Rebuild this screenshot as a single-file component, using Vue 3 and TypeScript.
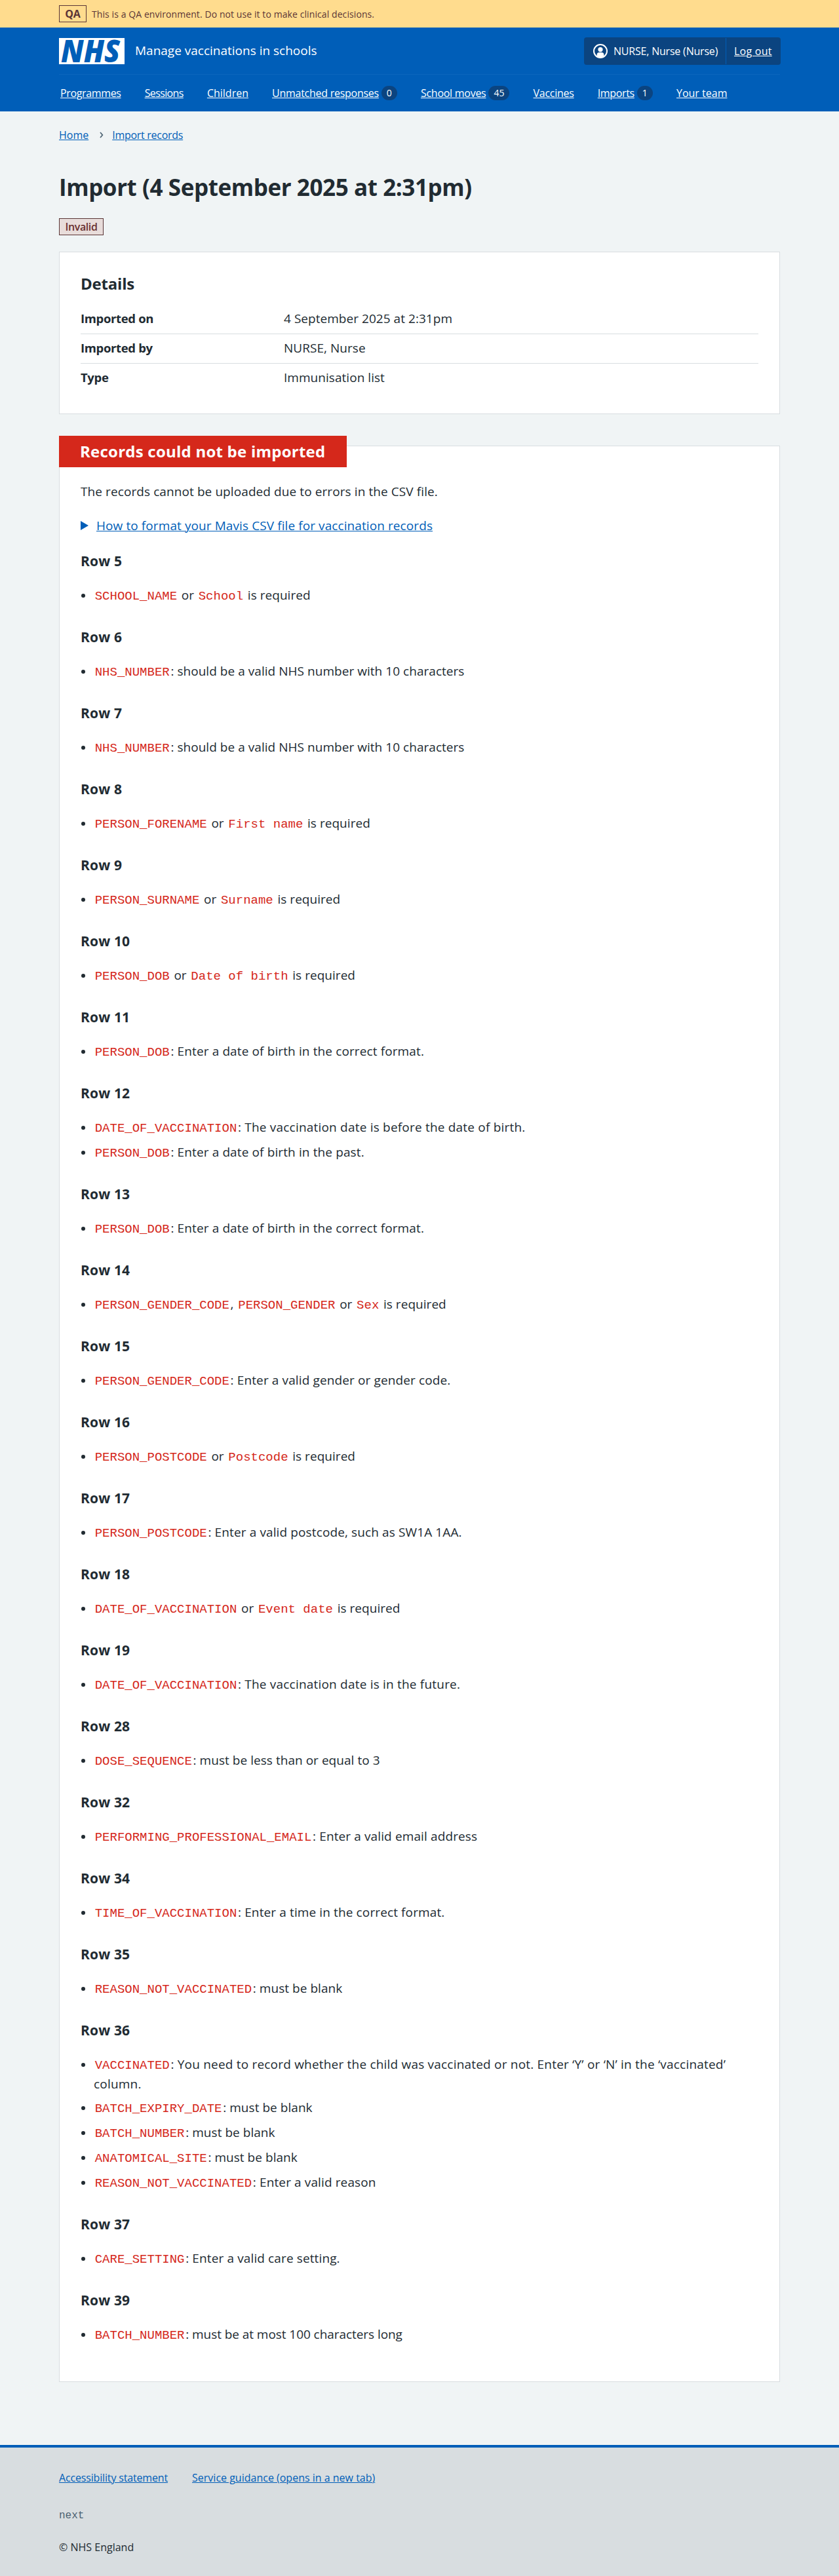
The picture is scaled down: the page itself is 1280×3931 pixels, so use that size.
<script setup lang="ts">
interface Part {
  text: string
  code?: boolean
}

interface RowErrors {
  row: number
  errors: Part[][]
}

interface NavItem {
  label: string
  count?: number
}

const navItems: NavItem[] = [
  { label: 'Programmes' },
  { label: 'Sessions' },
  { label: 'Children' },
  { label: 'Unmatched responses', count: 0 },
  { label: 'School moves', count: 45 },
  { label: 'Vaccines' },
  { label: 'Imports', count: 1 },
  { label: 'Your team' },
]

const details: [string, string][] = [
  ['Imported on', '4 September 2025 at 2:31pm'],
  ['Imported by', 'NURSE, Nurse'],
  ['Type', 'Immunisation list'],
]

// Splits a message on backticks; every second piece is a column name.
const parse = (message: string): Part[] =>
  message
    .split('`')
    .map((text, i) => ({ text, code: i % 2 === 1 }))
    .filter((part) => part.text !== '')

const row = (n: number, ...messages: string[]): RowErrors => ({
  row: n,
  errors: messages.map(parse),
})

// Letter-spacing class, chosen by the wording of the message.
const tracking = (parts: Part[]): string => {
  const text = parts.filter((part) => !part.code).map((part) => part.text).join('')
  if (text.includes('vaccinat')) return 'loose'
  if (text.startsWith(': Enter')) return 'open'
  if (text.includes('at most')) return 'snug'
  return ''
}

const rows: RowErrors[] = [
  row(5, '`SCHOOL_NAME` or `School` is required'),
  row(6, '`NHS_NUMBER`: should be a valid NHS number with 10 characters'),
  row(7, '`NHS_NUMBER`: should be a valid NHS number with 10 characters'),
  row(8, '`PERSON_FORENAME` or `First name` is required'),
  row(9, '`PERSON_SURNAME` or `Surname` is required'),
  row(10, '`PERSON_DOB` or `Date of birth` is required'),
  row(11, '`PERSON_DOB`: Enter a date of birth in the correct format.'),
  row(
    12,
    '`DATE_OF_VACCINATION`: The vaccination date is before the date of birth.',
    '`PERSON_DOB`: Enter a date of birth in the past.',
  ),
  row(13, '`PERSON_DOB`: Enter a date of birth in the correct format.'),
  row(14, '`PERSON_GENDER_CODE`, `PERSON_GENDER` or `Sex` is required'),
  row(15, '`PERSON_GENDER_CODE`: Enter a valid gender or gender code.'),
  row(16, '`PERSON_POSTCODE` or `Postcode` is required'),
  row(17, '`PERSON_POSTCODE`: Enter a valid postcode, such as SW1A 1AA.'),
  row(18, '`DATE_OF_VACCINATION` or `Event date` is required'),
  row(19, '`DATE_OF_VACCINATION`: The vaccination date is in the future.'),
  row(28, '`DOSE_SEQUENCE`: must be less than or equal to 3'),
  row(32, '`PERFORMING_PROFESSIONAL_EMAIL`: Enter a valid email address'),
  row(34, '`TIME_OF_VACCINATION`: Enter a time in the correct format.'),
  row(35, '`REASON_NOT_VACCINATED`: must be blank'),
  row(
    36,
    '`VACCINATED`: You need to record whether the child was vaccinated or not. Enter ‘Y’ or ‘N’ in the ‘vaccinated’ column.',
    '`BATCH_EXPIRY_DATE`: must be blank',
    '`BATCH_NUMBER`: must be blank',
    '`ANATOMICAL_SITE`: must be blank',
    '`REASON_NOT_VACCINATED`: Enter a valid reason',
  ),
  row(37, '`CARE_SETTING`: Enter a valid care setting.'),
  row(39, '`BATCH_NUMBER`: must be at most 100 characters long'),
]
</script>

<template>
  <div class="page">
    <div class="environment">
      <div class="container environment-inner">
        <strong class="environment-tag">QA</strong>
        <span>This is a QA environment. Do not use it to make clinical decisions.</span>
      </div>
    </div>

    <header class="header">
      <div class="container header-top">
        <a class="brand">
          <svg class="logo" width="100" height="40" viewBox="0 0 100 40" role="img" aria-label="NHS">
            <rect width="100" height="40" fill="#fff" />
            <text x="3" y="37" textLength="90" lengthAdjust="spacingAndGlyphs">NHS</text>
          </svg>
          <span class="service">Manage vaccinations in schools</span>
        </a>
        <div class="account">
          <div class="account-user">
            <svg width="22" height="22" viewBox="0 0 22 22" aria-hidden="true">
              <circle cx="11" cy="11" r="10" fill="none" stroke="#fff" stroke-width="2" />
              <circle cx="11" cy="8.6" r="3.6" fill="#fff" />
              <path d="M5.6 18.6V16.6a3.6 3.6 0 0 1 3.6-3.6h3.6a3.6 3.6 0 0 1 3.6 3.6v2Q11 22.6 5.6 18.6Z" fill="#fff" />
            </svg>
            <span>NURSE, Nurse (Nurse)</span>
          </div>
          <div class="account-out"><a>Log out</a></div>
        </div>
      </div>
      <nav class="container nav">
        <div v-for="item in navItems" :key="item.label" class="nav-item">
          <a>{{ item.label }}</a>
          <span v-if="item.count !== undefined" class="badge">{{ item.count }}</span>
        </div>
      </nav>
    </header>

    <main class="container main">
      <nav class="breadcrumb">
        <a>Home</a>
        <svg width="6" height="10" viewBox="0 0 6 10" aria-hidden="true">
          <path d="M1 1l3.4 4L1 9" fill="none" stroke="#4c6272" stroke-width="1.7" />
        </svg>
        <a class="crumb-last">Import records</a>
      </nav>

      <h1>Import (4 September 2025 at 2:31pm)</h1>
      <strong class="tag">Invalid</strong>

      <section class="card">
        <h2>Details</h2>
        <dl>
          <div v-for="[key, value] in details" :key="key" class="summary-row">
            <dt>{{ key }}</dt>
            <dd>{{ value }}</dd>
          </div>
        </dl>
      </section>

      <section class="card errors">
        <h2 class="card-label">Records could not be imported</h2>
        <p>The records cannot be uploaded due to errors in the CSV file.</p>
        <div class="expander">
          <svg width="12" height="14" viewBox="0 0 12 14" aria-hidden="true">
            <path d="M0 0l12 7-12 7z" fill="#005eb8" />
          </svg>
          <a>How to format your Mavis CSV file for vaccination records</a>
        </div>

        <div v-for="entry in rows" :key="entry.row" class="row-errors">
          <h3>Row {{ entry.row }}</h3>
          <ul>
            <li v-for="(parts, i) in entry.errors" :key="i" :class="tracking(parts)">
              <template v-for="(part, j) in parts" :key="j"><code v-if="part.code">{{ part.text }}</code><template v-else>{{ part.text }}</template></template>
            </li>
          </ul>
        </div>
      </section>
    </main>

    <footer class="footer">
      <div class="container">
        <div class="footer-links">
          <a>Accessibility statement</a>
          <a>Service guidance (opens in a new tab)</a>
        </div>
        <div class="version">next</div>
        <div class="copyright">© NHS England</div>
      </div>
    </footer>
  </div>
</template>

<style>
body {
  background: #f0f4f5;
}
</style>

<style scoped>
.page {
  font-family: "Open Sans", "Noto Sans", sans-serif;
  font-size: 19px;
  line-height: 28px;
  color: #212b32;
}
.container {
  width: 1100px;
  margin: 0 auto;
  box-sizing: border-box;
}
h1, h2, h3, p, dl, dd, ul {
  margin: 0;
  padding: 0;
}
a {
  color: #005eb8;
  text-decoration: underline;
  text-decoration-thickness: 1px;
  text-underline-offset: 1px;
}

/* Environment banner */
.environment {
  background: #ffdc8e;
  color: #5a3536;
}
.environment-inner {
  height: 42px;
  display: flex;
  align-items: center;
  gap: 8px;
  font-size: 14px;
  line-height: 19px;
  letter-spacing: 0.085px;
}
.environment-tag {
  width: 42px;
  height: 26px;
  box-sizing: border-box;
  border: 1px solid #5a3536;
  font-size: 16px;
  font-weight: 700;
  line-height: 24px;
  letter-spacing: -0.2px;
  text-align: center;
}

/* Header */
.header {
  background: #005eb8;
  color: #fff;
}
.header a {
  color: #fff;
}
.header-top {
  height: 72px;
  padding: 15px 0 14px;
  border-bottom: 1px solid #0b66bd;
  display: flex;
  justify-content: space-between;
  align-items: center;
}
.header .brand {
  display: flex;
  align-items: center;
  gap: 16px;
  text-decoration: none;
}
.logo {
  display: block;
  overflow: visible;
}
.logo text {
  font-family: "Open Sans", sans-serif;
  font-size: 47px;
  font-weight: 800;
  font-style: italic;
  fill: #005eb8;
}
.service {
  padding-bottom: 2px;
}
.account {
  height: 42px;
  display: flex;
  align-items: center;
  box-sizing: border-box;
  margin-right: -1px;
  background: #0b4480;
  border-radius: 4px;
  font-size: 16px;
  line-height: 22px;
}
.account-user {
  display: flex;
  align-items: center;
  gap: 9px;
  height: 40px;
  width: 217px;
  box-sizing: border-box;
  padding-left: 14px;
  border-right: 1px solid #005eb8;
  letter-spacing: -0.2px;
  white-space: nowrap;
}
.account-user svg {
  flex: none;
}
.account-out {
  width: 83px;
  box-sizing: border-box;
  padding-left: 12px;
  letter-spacing: 0.25px;
}
.nav {
  height: 56px;
  padding-left: 2px;
  display: flex;
  align-items: center;
  gap: 36.1px;
  font-size: 16px;
  line-height: 22px;
}
.nav-item {
  display: flex;
  align-items: center;
  gap: 4px;
  letter-spacing: -0.27px;
}
.nav-item:nth-child(1) {
  letter-spacing: -0.36px;
}
.nav-item:nth-child(2) {
  letter-spacing: -0.62px;
}
.nav-item:nth-child(3),
.nav-item:nth-child(8) {
  letter-spacing: 0;
}
.nav-item:nth-child(7) {
  letter-spacing: -0.35px;
}
.badge {
  min-width: 24px;
  height: 22px;
  padding: 0 8px;
  box-sizing: border-box;
  border-radius: 11px;
  background: #0b4480;
  font-size: 14px;
  letter-spacing: 0;
  text-align: center;
}

/* Main */
.main {
  padding-top: 24px;
}
.breadcrumb {
  display: flex;
  align-items: center;
  height: 24px;
  font-size: 16px;
  line-height: 24px;
}
.breadcrumb svg {
  margin: 0 13px 0 17px;
}
.crumb-last {
  letter-spacing: -0.28px;
}
h1 {
  margin-top: 41px;
  font-size: 35px;
  font-weight: 700;
  line-height: 53px;
  letter-spacing: -0.41px;
}
.tag {
  display: block;
  width: 68px;
  height: 26px;
  margin-top: 21px;
  box-sizing: border-box;
  border: 1px solid #5a3536;
  background: #e8dcda;
  color: #6a3230;
  font-size: 16px;
  font-weight: 600;
  line-height: 24px;
  letter-spacing: -0.39px;
  text-align: center;
}
.card {
  margin-top: 25px;
  padding: 31px 32px;
  background: #fff;
  border: 1px solid #d8dde0;
}
h2 {
  font-size: 24px;
  font-weight: 700;
  line-height: 33px;
  letter-spacing: -0.2px;
}
dl {
  margin-top: 16px;
}
.summary-row {
  display: flex;
  padding: 7px 0 9px;
  border-bottom: 1px solid #d8dde0;
}
.summary-row:last-child {
  border-bottom-color: transparent;
}
dt {
  width: 310px;
  font-size: 18.5px;
  font-weight: 700;
  letter-spacing: -0.35px;
}
dd {
  letter-spacing: 0.04px;
}

/* Errors */
.errors {
  margin-top: 48px;
  padding: 0 32px 56px;
}
.card-label {
  width: 439px;
  box-sizing: border-box;
  margin: -16px 0 0 -33px;
  padding: 7px 0 8px 32px;
  background: #d5281b;
  color: #fff;
  letter-spacing: 0.23px;
  white-space: nowrap;
}
.errors p {
  margin-top: 23px;
  letter-spacing: 0.09px;
}
.expander {
  margin-top: 24px;
  display: flex;
  align-items: center;
  gap: 12px;
  letter-spacing: 0.09px;
}
.row-errors {
  margin-top: 32px;
}
.expander + .row-errors {
  margin-top: 24px;
}
h3 {
  font-size: 21px;
  font-weight: 700;
  line-height: 32px;
  letter-spacing: 0.15px;
}
ul {
  margin-top: 22px;
  display: flex;
  flex-direction: column;
  gap: 8px;
  list-style: none;
}
li {
  display: block;
  position: relative;
  padding-left: 20px;
  letter-spacing: 0.04px;
}
li.loose {
  letter-spacing: 0.2px;
}
li.open {
  letter-spacing: 0.12px;
}
li.snug {
  letter-spacing: -0.06px;
}
li::before {
  content: "";
  position: absolute;
  left: 1px;
  top: 12px;
  width: 6px;
  height: 6px;
  border-radius: 50%;
  background: #212b32;
}
code {
  padding: 0 1.7px;
  font-family: "Liberation Mono", monospace;
  font-size: 19px;
  letter-spacing: 0;
  color: #d5281b;
}

/* Footer */
.footer {
  margin-top: 96px;
  padding: 34px 0 32px;
  border-top: 4px solid #005eb8;
  background: #d8dde0;
  font-size: 16px;
  line-height: 24px;
}
.footer-links {
  display: flex;
  gap: 37px;
}
.footer-links a:first-child {
  letter-spacing: -0.16px;
}
.version {
  height: 24px;
  margin-top: 34px;
  font-family: "Liberation Mono", monospace;
  color: #4c6272;
}
.copyright {
  margin-top: 24px;
}
</style>
